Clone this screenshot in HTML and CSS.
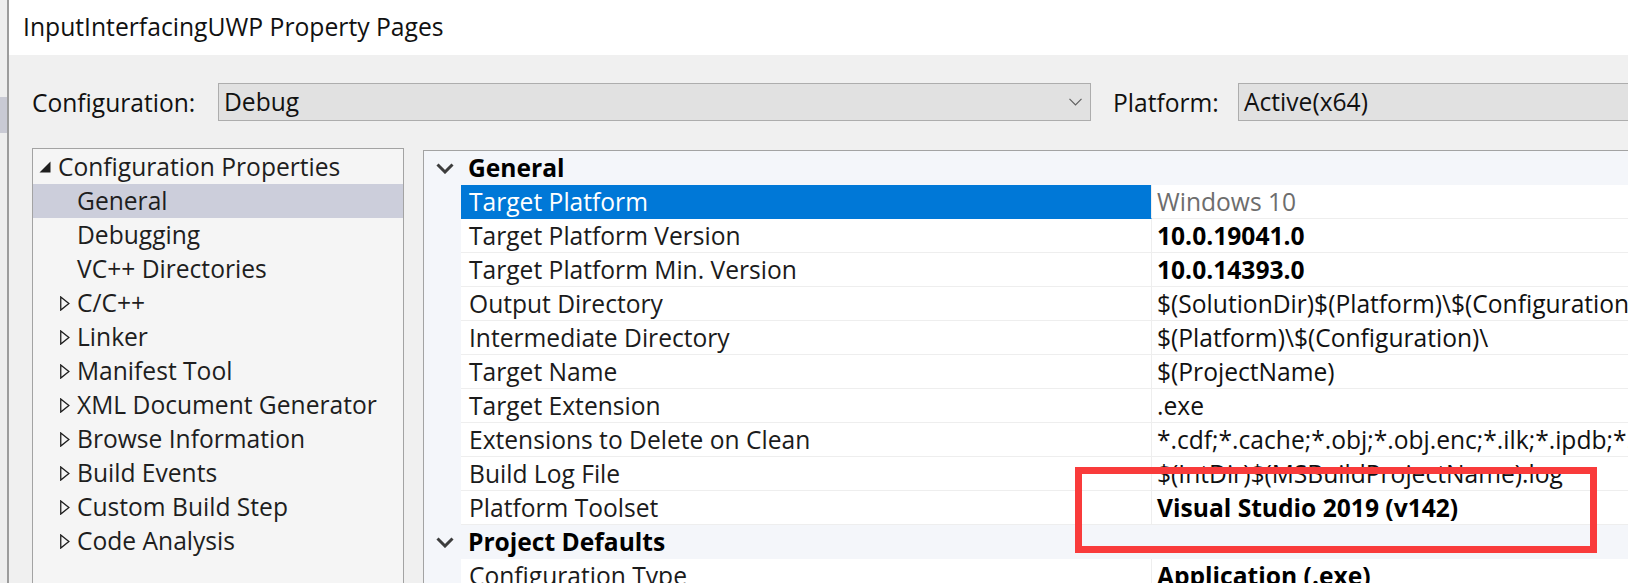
FILE: index.html
```html
<!DOCTYPE html>
<html lang="en">
<head>
<meta charset="utf-8">
<title>InputInterfacingUWP Property Pages</title>
<link rel="stylesheet" href="styles.css">
</head>
<body>
<div class="screen">
  <div class="backdrop"><div class="backdrop-block"></div></div>
  <div class="dialog">
    <div class="titlebar">InputInterfacingUWP Property Pages</div>
    <div class="dlg-body">
      <div class="config-row">
        <span class="label label-config">Configuration:</span>
        <div class="combo combo-config">
          <span class="combo-text">Debug</span>
          <svg class="combo-arrow" width="13" height="8" viewBox="0 0 13 8"><path d="M0.5 0.8 L6.5 6.8 L12.5 0.8" fill="none" stroke="#5f5f5f" stroke-width="1.2"/></svg>
        </div>
        <span class="label label-platform">Platform:</span>
        <div class="combo combo-platform"><span class="combo-text">Active(x64)</span></div>
      </div>
      <div class="panels">
        <div class="tree">
          <div class="tree-row root">
            <svg class="exp-open" width="12" height="12" viewBox="0 0 12 12"><path d="M11.5 0.5 L11.5 11.5 L0.5 11.5 Z" fill="#1e1e1e"/></svg>
            <span>Configuration Properties</span>
          </div>
          <div class="tree-row child selected"><span>General</span></div>
          <div class="tree-row child"><span>Debugging</span></div>
          <div class="tree-row child"><span>VC++ Directories</span></div>
          <div class="tree-row child exp"><svg class="exp-closed" width="10" height="15" viewBox="0 0 10 15"><path d="M0.75 0.9 L8.9 7.5 L0.75 14.1 Z" fill="none" stroke="#1e1e1e" stroke-width="1.3"/></svg><span>C/C++</span></div>
          <div class="tree-row child exp"><svg class="exp-closed" width="10" height="15" viewBox="0 0 10 15"><path d="M0.75 0.9 L8.9 7.5 L0.75 14.1 Z" fill="none" stroke="#1e1e1e" stroke-width="1.3"/></svg><span>Linker</span></div>
          <div class="tree-row child exp"><svg class="exp-closed" width="10" height="15" viewBox="0 0 10 15"><path d="M0.75 0.9 L8.9 7.5 L0.75 14.1 Z" fill="none" stroke="#1e1e1e" stroke-width="1.3"/></svg><span>Manifest Tool</span></div>
          <div class="tree-row child exp"><svg class="exp-closed" width="10" height="15" viewBox="0 0 10 15"><path d="M0.75 0.9 L8.9 7.5 L0.75 14.1 Z" fill="none" stroke="#1e1e1e" stroke-width="1.3"/></svg><span>XML Document Generator</span></div>
          <div class="tree-row child exp"><svg class="exp-closed" width="10" height="15" viewBox="0 0 10 15"><path d="M0.75 0.9 L8.9 7.5 L0.75 14.1 Z" fill="none" stroke="#1e1e1e" stroke-width="1.3"/></svg><span>Browse Information</span></div>
          <div class="tree-row child exp"><svg class="exp-closed" width="10" height="15" viewBox="0 0 10 15"><path d="M0.75 0.9 L8.9 7.5 L0.75 14.1 Z" fill="none" stroke="#1e1e1e" stroke-width="1.3"/></svg><span>Build Events</span></div>
          <div class="tree-row child exp"><svg class="exp-closed" width="10" height="15" viewBox="0 0 10 15"><path d="M0.75 0.9 L8.9 7.5 L0.75 14.1 Z" fill="none" stroke="#1e1e1e" stroke-width="1.3"/></svg><span>Custom Build Step</span></div>
          <div class="tree-row child exp"><svg class="exp-closed" width="10" height="15" viewBox="0 0 10 15"><path d="M0.75 0.9 L8.9 7.5 L0.75 14.1 Z" fill="none" stroke="#1e1e1e" stroke-width="1.3"/></svg><span>Code Analysis</span></div>
        </div>
        <div class="grid">
          <div class="grid-row category">
            <div class="gutter"><svg class="cat-chev" width="18" height="11" viewBox="0 0 18 11"><path d="M1.5 1.5 L9 9 L16.5 1.5" fill="none" stroke="#3d3d3d" stroke-width="3"/></svg></div>
            <div class="cat-name">General</div>
          </div>
          <div class="grid-row">
            <div class="gutter"></div>
            <div class="name selected">Target Platform</div>
            <div class="value muted">Windows 10</div>
          </div>
          <div class="grid-row">
            <div class="gutter"></div>
            <div class="name">Target Platform Version</div>
            <div class="value bold">10.0.19041.0</div>
          </div>
          <div class="grid-row">
            <div class="gutter"></div>
            <div class="name">Target Platform Min. Version</div>
            <div class="value bold">10.0.14393.0</div>
          </div>
          <div class="grid-row">
            <div class="gutter"></div>
            <div class="name">Output Directory</div>
            <div class="value">$(SolutionDir)$(Platform)\$(Configuration)\</div>
          </div>
          <div class="grid-row">
            <div class="gutter"></div>
            <div class="name">Intermediate Directory</div>
            <div class="value">$(Platform)\$(Configuration)\</div>
          </div>
          <div class="grid-row">
            <div class="gutter"></div>
            <div class="name">Target Name</div>
            <div class="value">$(ProjectName)</div>
          </div>
          <div class="grid-row">
            <div class="gutter"></div>
            <div class="name">Target Extension</div>
            <div class="value">.exe</div>
          </div>
          <div class="grid-row">
            <div class="gutter"></div>
            <div class="name">Extensions to Delete on Clean</div>
            <div class="value">*.cdf;*.cache;*.obj;*.obj.enc;*.ilk;*.ipdb;*.iobj;*.resources;*.tlb;*.tli;*.tlh;*.tmp;*.rsp</div>
          </div>
          <div class="grid-row">
            <div class="gutter"></div>
            <div class="name">Build Log File</div>
            <div class="value">$(IntDir)$(MSBuildProjectName).log</div>
          </div>
          <div class="grid-row">
            <div class="gutter"></div>
            <div class="name">Platform Toolset</div>
            <div class="value bold">Visual Studio 2019 (v142)</div>
          </div>
          <div class="grid-row category">
            <div class="gutter"><svg class="cat-chev" width="18" height="11" viewBox="0 0 18 11"><path d="M1.5 1.5 L9 9 L16.5 1.5" fill="none" stroke="#3d3d3d" stroke-width="3"/></svg></div>
            <div class="cat-name">Project Defaults</div>
          </div>
          <div class="grid-row">
            <div class="gutter"></div>
            <div class="name">Configuration Type</div>
            <div class="value bold">Application (.exe)</div>
          </div>
        </div>
      </div>
    </div>
  </div>
  <div class="annotation"></div>
</div>
</body>
</html>
```

FILE: styles.css
```css
* { box-sizing: border-box; }

html, body {
  margin: 0;
  padding: 0;
  background: #f0f0f0;
}

body {
  font-family: "Open Sans", "Noto Sans", "Liberation Sans", sans-serif;
  font-size: 24.6px;
  color: #1b1b1b;
}

.screen {
  position: relative;
  width: 1628px;
  height: 583px;
  overflow: hidden;
  display: flex;
}

.backdrop {
  flex: none;
  width: 7px;
  background: #eeeeee;
  padding-top: 97px;
}

.backdrop-block {
  height: 36px;
  background: #c9cad4;
}

.dialog {
  flex: none;
  width: 1720px;
  height: 583px;
  border-left: 2px solid #9c9c9c;
  display: flex;
  flex-direction: column;
  overflow: hidden;
}

.titlebar {
  flex: none;
  height: 55px;
  background: #ffffff;
  padding-left: 14px;
  line-height: 53px;
  font-size: 24.7px;
  white-space: nowrap;
  color: #111111;
}

.dlg-body {
  flex: 1;
  min-height: 0;
  overflow: hidden;
  background: #f0f0f0;
  padding-left: 23px;
}

.config-row {
  display: flex;
  align-items: center;
  margin-top: 28px;
  height: 38px;
}

.label {
  flex: none;
  white-space: nowrap;
  color: #111111;
}

.label-config { width: 186px; }

.label-platform {
  width: 125px;
  margin-left: 22px;
}

.combo {
  flex: none;
  height: 38px;
  background: #e1e1e1;
  border: 1px solid #adadad;
  display: flex;
  align-items: center;
  padding-left: 5px;
  line-height: 34px;
  color: #111111;
}

.combo-config {
  width: 873px;
  justify-content: space-between;
  padding-right: 8px;
}

.combo-platform { width: 520px; }

.combo-arrow { display: block; }

.panels {
  display: flex;
  align-items: flex-start;
  margin-top: 27px;
}

.tree {
  flex: none;
  width: 372px;
  height: 460px;
  background: #f5f5f5;
  border: 1px solid #a3a3a3;
  padding-top: 1px;
}

.tree-row {
  height: 34px;
  display: flex;
  align-items: center;
  white-space: nowrap;
  line-height: 34px;
  color: #1e1e1e;
}

.tree-row.root { padding-left: 6px; }
.tree-row.root .exp-open { margin-right: 7px; }

.tree-row.child { padding-left: 44px; }
.tree-row.child.exp { padding-left: 27px; }
.tree-row.child .exp-closed { margin-right: 7px; }

.tree-row.selected { background: #cccedb; }

.grid {
  flex: 1;
  margin-left: 19px;
  margin-top: 2px;
  height: 460px;
  background: #ffffff;
  border-top: 1px solid #a3a3a3;
  border-left: 1px solid #a3a3a3;
}

.grid-row {
  display: flex;
  height: 34px;
  white-space: nowrap;
}

.gutter {
  flex: none;
  width: 37px;
  height: 34px;
  background: #f4f6fa;
  display: flex;
  align-items: center;
  padding-left: 12px;
}

.name {
  flex: none;
  width: 691px;
  height: 34px;
  padding-left: 8px;
  line-height: 33px;
  border-right: 1px solid #eeeeee;
  border-bottom: 1px solid #eeeeee;
}

.name.selected {
  background: #0078d7;
  color: #ffffff;
  border-bottom-color: #0078d7;
}

.value {
  flex: 1;
  height: 34px;
  padding-left: 5px;
  line-height: 33px;
  overflow: hidden;
  border-bottom: 1px solid #eeeeee;
  color: #111111;
}

.value.muted { color: #6d6d6d; }
.bold { font-weight: 700; color: #000000; }

.category {
  background: #f4f6fa;
}

.cat-chev { display: block; }

.cat-name {
  flex: 1;
  padding-left: 7px;
  line-height: 34px;
  font-weight: 700;
  color: #000000;
}

.annotation {
  position: absolute;
  left: 1075px;
  top: 467px;
  width: 522px;
  height: 86px;
  border: 7px solid #f93b3b;
}
```
